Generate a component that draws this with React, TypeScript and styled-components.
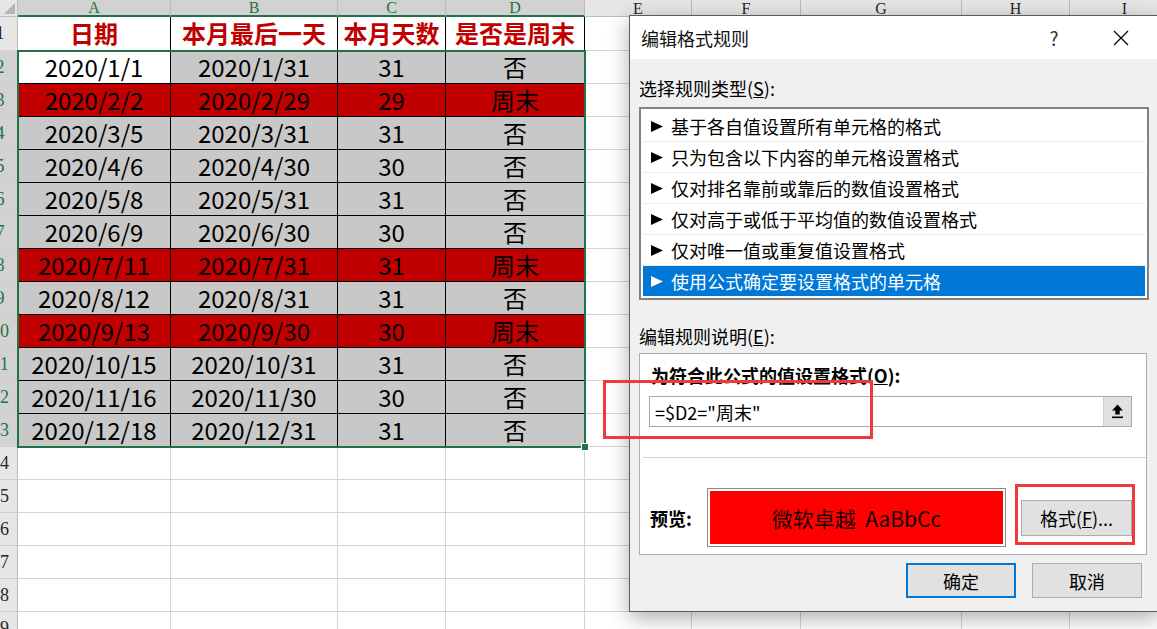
import React from 'react';
import styled, { createGlobalStyle } from 'styled-components';

const GlobalStyle = createGlobalStyle`
  html, body {
    margin: 0;
    padding: 0;
    overflow: hidden;
    background: #fff;
  }
  body {
    font-family: "Noto Sans CJK SC", "Noto Sans", sans-serif;
  }
`;

const COLS = [153, 167, 108, 139, 107, 109, 161, 108, 110];
const LETTERS = ['A', 'B', 'C', 'D', 'E', 'F', 'G', 'H', 'I'];
const TOTAL_ROWS = 19;

type Tone = 'head' | 'white' | 'gray' | 'red' | 'blank';

const DATA: [string, string, string, string, 'gray' | 'red'][] = [
  ['2020/1/1', '2020/1/31', '31', '否', 'gray'],
  ['2020/2/2', '2020/2/29', '29', '周末', 'red'],
  ['2020/3/5', '2020/3/31', '31', '否', 'gray'],
  ['2020/4/6', '2020/4/30', '30', '否', 'gray'],
  ['2020/5/8', '2020/5/31', '31', '否', 'gray'],
  ['2020/6/9', '2020/6/30', '30', '否', 'gray'],
  ['2020/7/11', '2020/7/31', '31', '周末', 'red'],
  ['2020/8/12', '2020/8/31', '31', '否', 'gray'],
  ['2020/9/13', '2020/9/30', '30', '周末', 'red'],
  ['2020/10/15', '2020/10/31', '31', '否', 'gray'],
  ['2020/11/16', '2020/11/30', '30', '否', 'gray'],
  ['2020/12/18', '2020/12/31', '31', '否', 'gray'],
];

const RULES = [
  '基于各自值设置所有单元格的格式',
  '只为包含以下内容的单元格设置格式',
  '仅对排名靠前或靠后的数值设置格式',
  '仅对高于或低于平均值的数值设置格式',
  '仅对唯一值或重复值设置格式',
  '使用公式确定要设置格式的单元格',
];

const Screen = styled.div`
  position: relative;
  width: 1157px;
  height: 629px;
  overflow: hidden;
  background: #fff;
`;

/* ---------- spreadsheet ---------- */

const Sheet = styled.div`
  display: grid;
  grid-template-columns: 18px ${COLS.map((c) => `${c}px`).join(' ')};
  grid-template-rows: 17px 34px;
  grid-auto-rows: 33px;
`;

const Corner = styled.div`
  position: relative;
  box-sizing: border-box;
  background: #e6e6e6;
  border-right: 1px solid #bcbcbc;
  border-bottom: 1px solid #bcbcbc;
  &::after {
    content: '';
    position: absolute;
    right: 2px;
    bottom: 2px;
    border-left: 11px solid transparent;
    border-bottom: 11px solid #b5b5b5;
  }
`;

const ColHead = styled.div<{ $sel?: boolean }>`
  box-sizing: border-box;
  display: flex;
  justify-content: center;
  align-items: flex-end;
  background: ${(p) => (p.$sel ? '#d2d2d2' : '#e6e6e6')};
  border-right: 1px solid #bcbcbc;
  border-bottom: ${(p) => (p.$sel ? '2px solid #217346' : '1px solid #bcbcbc')};
  font-family: "Liberation Serif", "DejaVu Serif", serif;
  font-size: 16px;
  line-height: 15px;
  color: ${(p) => (p.$sel ? '#217346' : '#262626')};
`;

const RowHead = styled.div<{ $sel?: boolean }>`
  box-sizing: border-box;
  display: flex;
  align-items: center;
  overflow: hidden;
  background: ${(p) => (p.$sel ? '#d2d2d2' : '#e6e6e6')};
  border-right: 1px solid #bcbcbc;
  border-bottom: 1px solid #d0d0d0;
  font-family: "Liberation Serif", "DejaVu Serif", serif;
  font-size: 18px;
  color: ${(p) => (p.$sel ? '#217346' : '#262626')};
`;

const RowLabel = styled.span`
  flex-shrink: 0;
  width: 36px;
  margin-left: -18px;
  text-align: center;
`;

const toneBg: Record<Tone, string> = {
  head: '#ffffff',
  white: '#ffffff',
  gray: '#c8c8c8',
  red: '#c00000',
  blank: '#ffffff',
};

const Cell = styled.div<{ $tone: Tone }>`
  box-sizing: border-box;
  display: flex;
  align-items: center;
  justify-content: center;
  white-space: nowrap;
  background: ${(p) => toneBg[p.$tone]};
  border-right: 1px solid ${(p) => (p.$tone === 'blank' ? '#d4d4d4' : '#000')};
  border-bottom: 1px solid ${(p) => (p.$tone === 'blank' ? '#d4d4d4' : '#000')};
  font-family: "Noto Sans CJK SC", "Noto Sans", sans-serif;
  font-size: 24px;
  line-height: 1.2;
  font-weight: ${(p) => (p.$tone === 'head' ? 700 : 400)};
  color: ${(p) => (p.$tone === 'head' ? '#c00000' : '#000')};
`;

const Selection = styled.div`
  position: absolute;
  left: 17px;
  top: 50px;
  width: 569px;
  height: 398px;
  box-sizing: border-box;
  border: 2px solid #217346;
  pointer-events: none;
  &::after {
    content: '';
    position: absolute;
    right: -5px;
    bottom: -5px;
    width: 6px;
    height: 6px;
    background: #217346;
    border: 1px solid #fff;
  }
`;

/* ---------- dialog ---------- */

const Dialog = styled.div`
  position: absolute;
  left: 629px;
  top: 15px;
  width: 531px;
  height: 597px;
  box-sizing: border-box;
  border: 1px solid #5a5a5a;
  background: #f0f0f0;
  box-shadow: 0 6px 20px rgba(0, 0, 0, 0.32);
  display: flex;
  flex-direction: column;
  font-family: "Noto Sans CJK SC", "Noto Sans", sans-serif;
  font-size: 18px;
  color: #000;
`;

const TitleBar = styled.div`
  height: 43px;
  flex-shrink: 0;
  display: flex;
  align-items: center;
  background: #fff;
  padding-left: 11px;
`;

const Title = styled.div`
  flex: 1;
  color: #111;
`;

const TitleButton = styled.div<{ $gap?: number }>`
  width: 46px;
  height: 43px;
  display: flex;
  align-items: center;
  justify-content: center;
  margin-right: ${(p) => p.$gap ?? 0}px;
  color: #333;
  font-size: 19px;
`;

const Body = styled.div`
  flex: 1;
  display: flex;
  flex-direction: column;
  padding: 0 10px 0 9px;
`;

const Label = styled.div<{ $top: number }>`
  margin-top: ${(p) => p.$top}px;
  line-height: 24px;
  height: 24px;
  white-space: nowrap;
`;

const RuleList = styled.div`
  margin-top: 7px;
  border: 2px solid #828282;
  background: #fff;
  padding: 2px;
  display: flex;
  flex-direction: column;
`;

const RuleItem = styled.div<{ $active?: boolean }>`
  height: 30px;
  display: flex;
  align-items: center;
  gap: 8px;
  padding-left: 8px;
  white-space: nowrap;
  background: ${(p) => (p.$active ? '#0078d7' : '#fff')};
  color: ${(p) => (p.$active ? '#fff' : '#000')};
  & + & {
    border-top: 1px solid #ececec;
  }
`;

const RuleBox = styled.div`
  margin-top: 5px;
  margin-right: 2px;
  border: 1px solid #adadad;
  background: #fff;
  padding: 9px 0 7px 0;
  display: flex;
  flex-direction: column;
`;

const BoldLabel = styled.div`
  font-weight: 700;
  line-height: 24px;
  padding-left: 11px;
  white-space: nowrap;
`;

const FormulaField = styled.div`
  margin: 9px 14px 0 9px;
  height: 31px;
  box-sizing: border-box;
  border: 1px solid #a9a9a9;
  display: flex;
  align-items: stretch;
`;

const FormulaText = styled.div`
  flex: 1;
  display: flex;
  align-items: center;
  padding-left: 5px;
  white-space: nowrap;
`;

const CollapseButton = styled.div`
  width: 27px;
  background: #e1e1e1;
  border-left: 1px solid #cfcfcf;
  display: flex;
  align-items: center;
  justify-content: center;
`;

const Divider = styled.div`
  margin: 30px 0 0 3px;
  height: 1px;
  background: #d2d2d2;
`;

const PreviewRow = styled.div`
  margin-top: 30px;
  height: 59px;
  display: flex;
  align-items: center;
  padding-left: 10px;
`;

const PreviewLabel = styled.div`
  width: 57px;
  font-weight: 700;
  white-space: nowrap;
`;

const PreviewFrame = styled.div`
  width: 299px;
  height: 59px;
  box-sizing: border-box;
  border: 1px solid #8a8a8a;
  padding: 2px;
  background: #fff;
`;

const PreviewFill = styled.div`
  height: 100%;
  background: #ff0000;
  display: flex;
  align-items: center;
  justify-content: center;
  white-space: pre;
  font-size: 21px;
  color: #1c0000;
`;

const Button = styled.div<{ $primary?: boolean; $w: number; $h: number }>`
  width: ${(p) => p.$w}px;
  height: ${(p) => p.$h}px;
  box-sizing: border-box;
  background: #e1e1e1;
  border: ${(p) => (p.$primary ? '2px solid #0078d7' : '1px solid #adadad')};
  display: flex;
  align-items: center;
  justify-content: center;
  white-space: nowrap;
`;

const FormatSlot = styled.div`
  margin-left: 15px;
`;

const ButtonRow = styled.div`
  margin: 8px 7px 0 0;
  display: flex;
  justify-content: flex-end;
  gap: 16px;
`;

const RedFrame = styled.div<{ $x: number; $y: number; $w: number; $h: number }>`
  position: absolute;
  left: ${(p) => p.$x}px;
  top: ${(p) => p.$y}px;
  width: ${(p) => p.$w}px;
  height: ${(p) => p.$h}px;
  box-sizing: border-box;
  border: 3px solid #f03a3a;
  pointer-events: none;
`;

const Triangle = () => (
  <svg width="12" height="11" viewBox="0 0 12 11">
    <polygon points="0,0 12,5.5 0,11" fill="currentColor" />
  </svg>
);

const CloseIcon = () => (
  <svg width="16" height="16" viewBox="0 0 16 16">
    <path d="M1 1 L15 15 M15 1 L1 15" stroke="#000" strokeWidth="1.2" fill="none" />
  </svg>
);

const CollapseIcon = () => (
  <svg width="13" height="15" viewBox="0 0 13 15">
    <path d="M6.5 0.5 L12 6.5 H8.7 V10.5 H4.3 V6.5 H1 Z" fill="#000" />
    <rect x="1" y="12.5" width="11" height="1.6" fill="#000" />
  </svg>
);

function rowCells(r: number) {
  const cells: React.ReactNode[] = [];
  const sel = r >= 2 && r <= 13;
  cells.push(
    <RowHead key={`h${r}`} $sel={sel}>
      <RowLabel>{r}</RowLabel>
    </RowHead>
  );
  for (let c = 0; c < LETTERS.length; c++) {
    let tone: Tone = 'blank';
    let text = '';
    if (c < 4 && r === 1) {
      tone = 'head';
      text = ['日期', '本月最后一天', '本月天数', '是否是周末'][c];
    } else if (c < 4 && sel) {
      const row = DATA[r - 2];
      tone = r === 2 && c === 0 ? 'white' : row[4];
      text = row[c];
    }
    cells.push(
      <Cell key={`${r}-${c}`} $tone={tone}>
        {text}
      </Cell>
    );
  }
  return cells;
}

export default function App() {
  return (
    <Screen>
      <GlobalStyle />
      <Sheet>
        <Corner />
        {LETTERS.map((l, i) => (
          <ColHead key={l} $sel={i < 4}>
            {l}
          </ColHead>
        ))}
        {Array.from({ length: TOTAL_ROWS }, (_, i) => rowCells(i + 1))}
      </Sheet>
      <Selection />

      <Dialog>
        <TitleBar>
          <Title>编辑格式规则</Title>
          <TitleButton $gap={21}>?</TitleButton>
          <TitleButton $gap={15}>
            <CloseIcon />
          </TitleButton>
        </TitleBar>
        <Body>
          <Label $top={17}>
            选择规则类型(<u>S</u>):
          </Label>
          <RuleList>
            {RULES.map((r, i) => (
              <RuleItem key={r} $active={i === RULES.length - 1}>
                <Triangle />
                <span>{r}</span>
              </RuleItem>
            ))}
          </RuleList>
          <Label $top={24}>
            编辑规则说明(<u>E</u>):
          </Label>
          <RuleBox>
            <BoldLabel>
              为符合此公式的值设置格式(<u>O</u>):
            </BoldLabel>
            <FormulaField>
              <FormulaText>=$D2="周末"</FormulaText>
              <CollapseButton>
                <CollapseIcon />
              </CollapseButton>
            </FormulaField>
            <Divider />
            <PreviewRow>
              <PreviewLabel>预览:</PreviewLabel>
              <PreviewFrame>
                <PreviewFill>{'微软卓越  AaBbCc'}</PreviewFill>
              </PreviewFrame>
              <FormatSlot>
                <Button $w={111} $h={36}>
                  格式(<u>F</u>)...
                </Button>
              </FormatSlot>
            </PreviewRow>
          </RuleBox>
          <ButtonRow>
            <Button $primary $w={110} $h={35}>
              确定
            </Button>
            <Button $w={110} $h={35}>
              取消
            </Button>
          </ButtonRow>
        </Body>
      </Dialog>

      <RedFrame $x={603} $y={380} $w={270} $h={59} />
      <RedFrame $x={1015} $y={484} $w={120} $h={61} />
    </Screen>
  );
}
